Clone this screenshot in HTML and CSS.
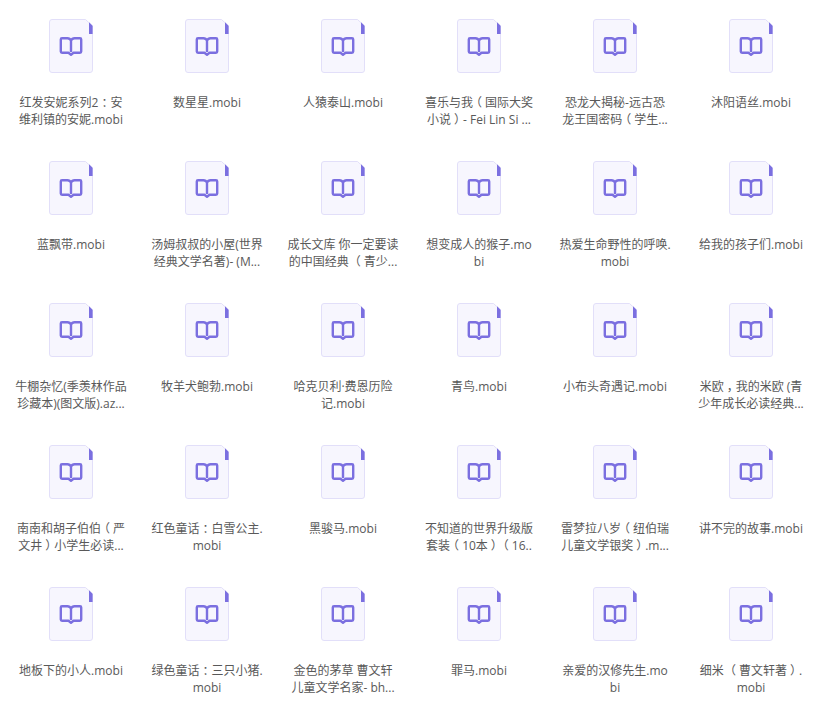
FILE: index.html
```html
<!DOCTYPE html>
<html lang="zh">
<head>
<meta charset="utf-8">
<title>文件列表</title>
<link rel="stylesheet" href="styles.css">
</head>
<body>
<svg class="defs" width="0" height="0" aria-hidden="true">
  <symbol id="book" viewBox="0 0 44 54">
    <path d="M3 .5H36.500L43.500 7V51A2.500 2.500 0 0 1 41 53.500H3A2.500 2.500 0 0 1 .5 51V3A2.500 2.500 0 0 1 3 .5Z" fill="#f7f6fe" stroke="#e2dff9"/>
    <path d="M40 3.200L43.600 6.800V15H40Z" fill="#7b6fe0"/>
    <path d="M13 19.200H18.500C20 19.200 21.300 20 22 21.500C22.700 20 24 19.200 25.500 19.200H31C31.700 19.200 32.200 19.700 32.200 20.400V32.600C32.200 33.300 31.700 33.800 31 33.800H24.500L22 35.800L19.500 33.800H13C12.300 33.800 11.800 33.300 11.800 32.600V20.400C11.800 19.700 12.300 19.200 13 19.200ZM22 21.500V33" fill="none" stroke="#7b6fe0" stroke-width="2.400" stroke-linejoin="round"/>
  </symbol>
</svg>
<main class="grid">
  <div class="item"><svg class="icon"><use href="#book"/></svg><p class="name">红发安妮系列2<span class="fw">：</span>安<br>维利镇的安妮.mobi</p></div>
  <div class="item"><svg class="icon"><use href="#book"/></svg><p class="name">数星星.mobi</p></div>
  <div class="item"><svg class="icon"><use href="#book"/></svg><p class="name">人猿泰山.mobi</p></div>
  <div class="item"><svg class="icon"><use href="#book"/></svg><p class="name">喜乐与我<span class="fw">（</span>国际大奖<br>小说<span class="fw">）</span>- Fei Lin Si ...</p></div>
  <div class="item"><svg class="icon"><use href="#book"/></svg><p class="name">恐龙大揭秘-远古恐<br>龙王国密码<span class="fw">（</span>学生...</p></div>
  <div class="item"><svg class="icon"><use href="#book"/></svg><p class="name">沐阳语丝.mobi</p></div>

  <div class="item"><svg class="icon"><use href="#book"/></svg><p class="name">蓝飘带.mobi</p></div>
  <div class="item"><svg class="icon"><use href="#book"/></svg><p class="name">汤姆叔叔的小屋(世界<br>经典文学名著)- (M...</p></div>
  <div class="item"><svg class="icon"><use href="#book"/></svg><p class="name">成长文库 你一定要读<br>的中国经典 <span class="fw">（</span>青少...</p></div>
  <div class="item"><svg class="icon"><use href="#book"/></svg><p class="name">想变成人的猴子.mo<br>bi</p></div>
  <div class="item"><svg class="icon"><use href="#book"/></svg><p class="name">热爱生命野性的呼唤.<br>mobi</p></div>
  <div class="item"><svg class="icon"><use href="#book"/></svg><p class="name">给我的孩子们.mobi</p></div>

  <div class="item"><svg class="icon"><use href="#book"/></svg><p class="name">牛棚杂忆(季羡林作品<br>珍藏本)(图文版).az...</p></div>
  <div class="item"><svg class="icon"><use href="#book"/></svg><p class="name">牧羊犬鲍勃.mobi</p></div>
  <div class="item"><svg class="icon"><use href="#book"/></svg><p class="name">哈克贝利·费恩历险<br>记.mobi</p></div>
  <div class="item"><svg class="icon"><use href="#book"/></svg><p class="name">青鸟.mobi</p></div>
  <div class="item"><svg class="icon"><use href="#book"/></svg><p class="name">小布头奇遇记.mobi</p></div>
  <div class="item"><svg class="icon"><use href="#book"/></svg><p class="name">米欧<span class="fw">，</span>我的米欧 (青<br>少年成长必读经典...</p></div>

  <div class="item"><svg class="icon"><use href="#book"/></svg><p class="name">南南和胡子伯伯<span class="fw">（</span>严<br>文井<span class="fw">）</span>小学生必读...</p></div>
  <div class="item"><svg class="icon"><use href="#book"/></svg><p class="name">红色童话<span class="fw">：</span>白雪公主.<br>mobi</p></div>
  <div class="item"><svg class="icon"><use href="#book"/></svg><p class="name">黑骏马.mobi</p></div>
  <div class="item"><svg class="icon"><use href="#book"/></svg><p class="name">不知道的世界升级版<br>套装<span class="fw">（</span>10本<span class="fw">）</span><span class="fw">（</span>16..</p></div>
  <div class="item"><svg class="icon"><use href="#book"/></svg><p class="name">雷梦拉八岁<span class="fw">（</span>纽伯瑞<br>儿童文学银奖<span class="fw">）</span>.m...</p></div>
  <div class="item"><svg class="icon"><use href="#book"/></svg><p class="name">讲不完的故事.mobi</p></div>

  <div class="item"><svg class="icon"><use href="#book"/></svg><p class="name">地板下的小人.mobi</p></div>
  <div class="item"><svg class="icon"><use href="#book"/></svg><p class="name">绿色童话<span class="fw">：</span>三只小猪.<br>mobi</p></div>
  <div class="item"><svg class="icon"><use href="#book"/></svg><p class="name">金色的茅草 曹文轩<br>儿童文学名家- bh...</p></div>
  <div class="item"><svg class="icon"><use href="#book"/></svg><p class="name">罪马.mobi</p></div>
  <div class="item"><svg class="icon"><use href="#book"/></svg><p class="name">亲爱的汉修先生.mo<br>bi</p></div>
  <div class="item"><svg class="icon"><use href="#book"/></svg><p class="name">细米 <span class="fw">（</span>曹文轩著<span class="fw">）</span>.<br>mobi</p></div>
</main>
</body>
</html>
```
FILE: styles.css
```css
html, body {
  margin: 0;
  padding: 0;
  background: #fff;
  overflow: hidden;
}
.defs {
  display: block;
  height: 0;
}
.grid {
  display: grid;
  grid-template-columns: repeat(6, 136px);
  grid-auto-rows: 142px;
  padding: 19px 0 0 3px;
}
.item {
  display: flex;
  flex-direction: column;
  align-items: center;
}
.icon {
  width: 44px;
  height: 54px;
  flex: none;
}
.name {
  margin: 21px 0 0;
  width: 120px;
  font-family: "Open Sans", "Noto Sans CJK SC", sans-serif;
  font-size: 12px;
  line-height: 17px;
  color: #595959;
  text-align: center;
  white-space: nowrap;
}
.fw {
  display: inline-block;
  width: 12px;
  text-align: center;
  font-feature-settings: "halt";
}
```
